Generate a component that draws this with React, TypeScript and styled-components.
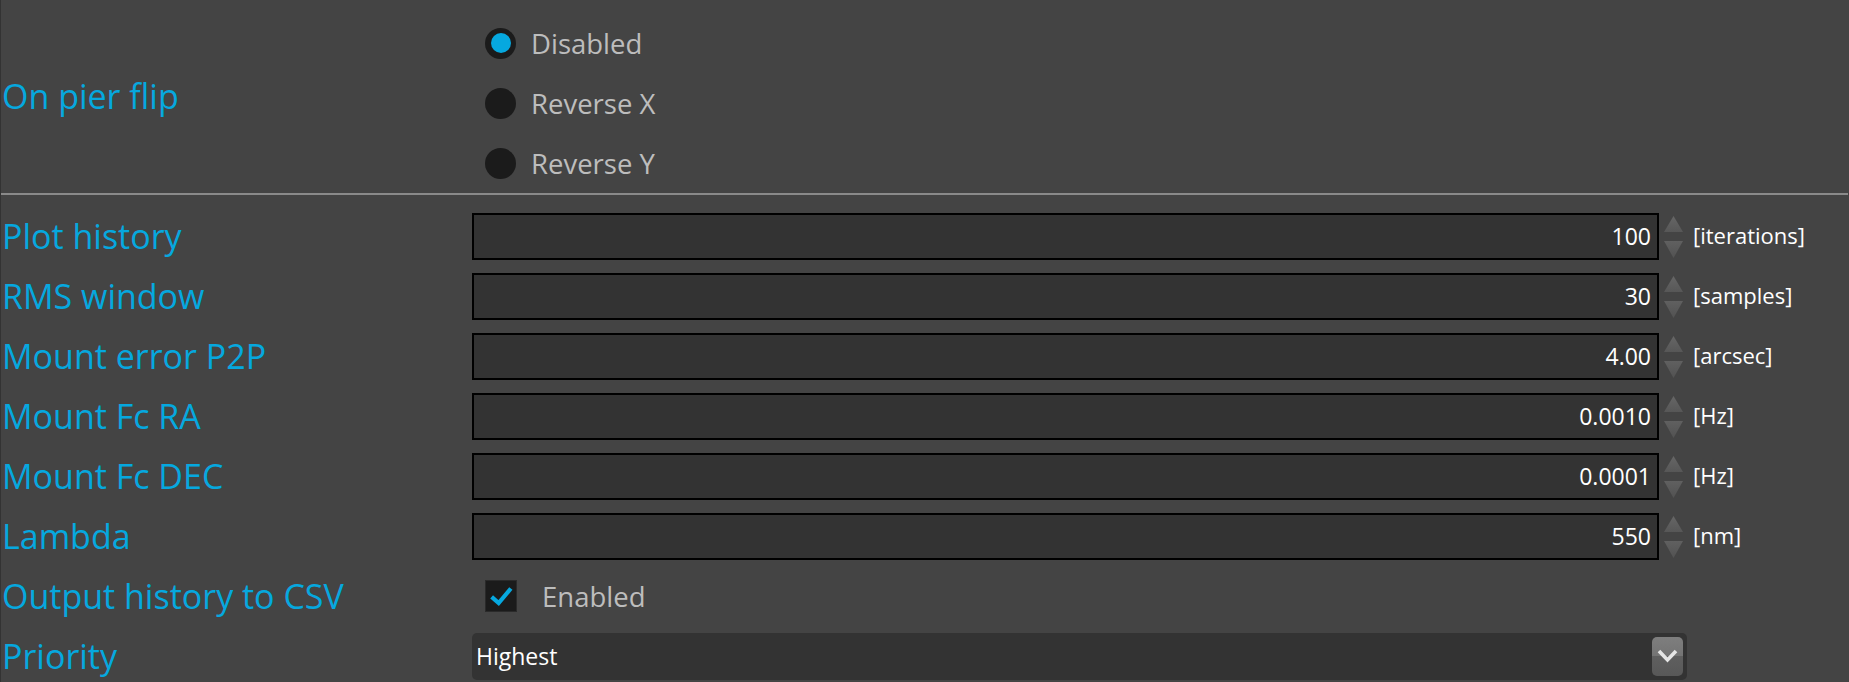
import React from "react";
import styled, { createGlobalStyle } from "styled-components";

const GlobalStyle = createGlobalStyle`
  html, body {
    margin: 0;
    padding: 0;
    background: #444444;
  }
  body {
    font-family: "Segoe UI", "Open Sans", "Noto Sans", sans-serif;
    overflow: hidden;
  }
`;

const BLUE = "#06a8df";

const Page = styled.div`
  width: 1848px;
  height: 682px;
  border-left: 1px solid #333333;
  padding-top: 13px;
  box-sizing: border-box;
`;

const TopSection = styled.div`
  display: grid;
  grid-template-columns: 471px 1fr;
  align-items: center;
`;

const Label = styled.div`
  color: ${BLUE};
  font-size: 34px;
  padding-left: 1px;
  white-space: nowrap;
  line-height: 1;
`;

const GroupLabel = styled(Label)`
  padding-bottom: 14px;
`;

const RadioGroup = styled.div`
  display: flex;
  flex-direction: column;
`;

const RadioOption = styled.label`
  height: 60px;
  display: flex;
  align-items: center;
  padding-left: 13px;
  color: #bdbdbd;
  font-size: 27.5px;
`;

const RadioCircle = styled.span<{ $checked?: boolean }>`
  width: 31px;
  height: 31px;
  border-radius: 50%;
  background: #1b1b1b;
  display: flex;
  align-items: center;
  justify-content: center;
  margin-right: 15px;
  &::after {
    content: "";
    width: 20px;
    height: 20px;
    border-radius: 50%;
    background: ${(p) => (p.$checked ? BLUE : "transparent")};
  }
`;

const Divider = styled.div`
  height: 2px;
  background: #8a8a8a;
  margin-bottom: 11px;
`;

const SettingsGrid = styled.div`
  display: grid;
  grid-template-columns: 471px 1215px 1fr;
  grid-auto-rows: 60px;
  align-items: center;
`;

const Field = styled.div`
  display: flex;
  align-items: center;
  height: 47px;
`;

const NumberBox = styled.div`
  flex: 1;
  height: 47px;
  box-sizing: border-box;
  background: #333333;
  border: 2px solid #000000;
  display: flex;
  align-items: center;
  justify-content: flex-end;
  padding-right: 6px;
  color: #ffffff;
  font-size: 23px;
`;

const Spinner = styled.div`
  width: 28px;
  display: flex;
  flex-direction: column;
  align-items: center;
  gap: 9px;
  padding-top: 2px;
`;

const Unit = styled.div`
  color: #ffffff;
  font-size: 22px;
  padding-left: 6px;
  padding-bottom: 3px;
  white-space: nowrap;
`;

const CheckRow = styled.label`
  display: flex;
  align-items: center;
  padding-left: 13px;
  color: #bdbdbd;
  font-size: 27.5px;
`;

const CheckBox = styled.span`
  width: 32px;
  height: 32px;
  box-sizing: border-box;
  background: #1b1b1b;
  border: 1px solid #2a2a2a;
  margin-right: 25px;
  display: flex;
  align-items: center;
  justify-content: center;
`;

const Combo = styled.div`
  height: 47px;
  border-radius: 5px;
  background: #333333;
  display: flex;
  align-items: center;
  justify-content: space-between;
  padding: 0 4px;
  color: #ffffff;
  font-size: 23px;
`;

const ComboButton = styled.div`
  width: 31px;
  height: 39px;
  border-radius: 5px;
  background: linear-gradient(#7e7e7e 0%, #747474 50%, #5f5f5f 50%, #585858 100%);
  display: flex;
  align-items: center;
  justify-content: center;
`;

const UpArrow = () => (
  <svg width="19" height="16" viewBox="0 0 19 16">
    <defs>
      <linearGradient id="ua" x1="0" y1="0" x2="0" y2="1">
        <stop offset="0" stopColor="#666666" />
        <stop offset="1" stopColor="#575757" />
      </linearGradient>
    </defs>
    <polygon points="9.5,0 19,16 0,16" fill="url(#ua)" />
  </svg>
);

const DownArrow = () => (
  <svg width="19" height="17" viewBox="0 0 19 17">
    <defs>
      <linearGradient id="da" x1="0" y1="0" x2="0" y2="1">
        <stop offset="0" stopColor="#606060" />
        <stop offset="1" stopColor="#525252" />
      </linearGradient>
    </defs>
    <polygon points="0,0 19,0 9.5,17" fill="url(#da)" />
  </svg>
);

const CheckMark = () => (
  <svg width="32" height="32" viewBox="0 0 32 32">
    <polyline
      points="6,17 13.5,23.5 26.5,8"
      fill="none"
      stroke={BLUE}
      strokeWidth="4.5"
      strokeLinecap="butt"
      strokeLinejoin="miter"
    />
  </svg>
);

const Chevron = () => (
  <svg width="21" height="14" viewBox="0 0 21 14">
    <polyline
      points="2,2 10.5,11 19,2"
      fill="none"
      stroke="#e6e6e6"
      strokeWidth="3.6"
    />
  </svg>
);

type NumRow = { label: string; value: string; unit: string };

const numberRows: NumRow[] = [
  { label: "Plot history", value: "100", unit: "[iterations]" },
  { label: "RMS window", value: "30", unit: "[samples]" },
  { label: "Mount error P2P", value: "4.00", unit: "[arcsec]" },
  { label: "Mount Fc RA", value: "0.0010", unit: "[Hz]" },
  { label: "Mount Fc DEC", value: "0.0001", unit: "[Hz]" },
  { label: "Lambda", value: "550", unit: "[nm]" },
];

const radios = [
  { label: "Disabled", checked: true },
  { label: "Reverse X", checked: false },
  { label: "Reverse Y", checked: false },
];

export default function App() {
  return (
    <>
      <GlobalStyle />
      <Page>
        <TopSection>
          <GroupLabel>On pier flip</GroupLabel>
          <RadioGroup>
            {radios.map((r) => (
              <RadioOption key={r.label}>
                <RadioCircle $checked={r.checked} />
                {r.label}
              </RadioOption>
            ))}
          </RadioGroup>
        </TopSection>
        <Divider />
        <SettingsGrid>
          {numberRows.map((r) => (
            <React.Fragment key={r.label}>
              <Label>{r.label}</Label>
              <Field>
                <NumberBox>{r.value}</NumberBox>
                <Spinner>
                  <UpArrow />
                  <DownArrow />
                </Spinner>
              </Field>
              <Unit>{r.unit}</Unit>
            </React.Fragment>
          ))}
          <Label>Output history to CSV</Label>
          <CheckRow>
            <CheckBox>
              <CheckMark />
            </CheckBox>
            Enabled
          </CheckRow>
          <div />
          <Label>Priority</Label>
          <Combo>
            <span>Highest</span>
            <ComboButton>
              <Chevron />
            </ComboButton>
          </Combo>
          <div />
        </SettingsGrid>
      </Page>
    </>
  );
}
